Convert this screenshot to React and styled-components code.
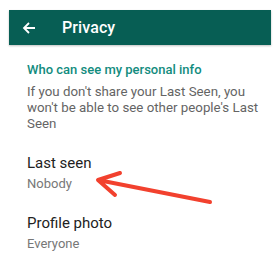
import React from "react";
import styled, { createGlobalStyle } from "styled-components";

const Global = createGlobalStyle`
  body {
    margin: 0;
    background: #ffffff;
    font-family: Roboto, "Noto Sans", sans-serif;
  }
`;

const Screen = styled.div`
  position: relative;
  width: 262px;
  margin: 10px 0 0 9px;
`;

const Toolbar = styled.div`
  height: 35px;
  display: flex;
  align-items: center;
  background: #075e54;
  box-shadow: 0 1px 2px rgba(0, 0, 0, 0.25);
  color: #ffffff;
`;

const Back = styled.span`
  display: flex;
  width: 53px;
  padding-left: 13px;
  box-sizing: border-box;
`;

const Title = styled.h1`
  margin: 0;
  font-size: 16px;
  font-weight: 500;
  letter-spacing: 0.1px;
`;

const Content = styled.div`
  padding: 17px 0 0 18px;
`;

const SectionTitle = styled.h2`
  margin: 0;
  font-size: 13px;
  font-weight: 500;
  color: #128c7e;
  line-height: 16px;
`;

const Hint = styled.p`
  margin: 6px 0 0;
  font-size: 13.3px;
  line-height: 16px;
  color: #646464;
  padding-right: 10px;
`;

const Item = styled.div`
  padding-top: ${(p) => p.$top}px;
`;

const ItemLabel = styled.div`
  font-size: 15px;
  line-height: 19px;
  color: #222222;
`;

const ItemValue = styled.div`
  font-size: 13px;
  line-height: 17px;
  color: #777777;
  margin-top: 2px;
`;

const Arrow = styled.svg`
  position: absolute;
  left: 0;
  top: 0;
  pointer-events: none;
`;

export default function App() {
  return (
    <>
      <Global />
      <Screen>
        <Toolbar>
          <Back>
            <svg width="14" height="14" viewBox="0 0 14 14" fill="none">
              <path d="M13 7H2M7 2L2 7l5 5" stroke="#fff" strokeWidth="1.8" />
            </svg>
          </Back>
          <Title>Privacy</Title>
        </Toolbar>
        <Content>
          <SectionTitle>Who can see my personal info</SectionTitle>
          <Hint>
            If you don't share your Last Seen, you won't be able to see other
            people's Last Seen
          </Hint>
          <Item $top={22}>
            <ItemLabel>Last seen</ItemLabel>
            <ItemValue>Nobody</ItemValue>
          </Item>
          <Item $top={22}>
            <ItemLabel>Profile photo</ItemLabel>
            <ItemValue>Everyone</ItemValue>
          </Item>
        </Content>
        <Arrow width="262" height="266" viewBox="0 0 262 266">
          <path
            d="M201 192L89 170M111 163L89 170L106 185"
            stroke="#f2412e"
            strokeWidth="4"
            strokeLinecap="round"
            strokeLinejoin="round"
            fill="none"
          />
        </Arrow>
      </Screen>
    </>
  );
}
